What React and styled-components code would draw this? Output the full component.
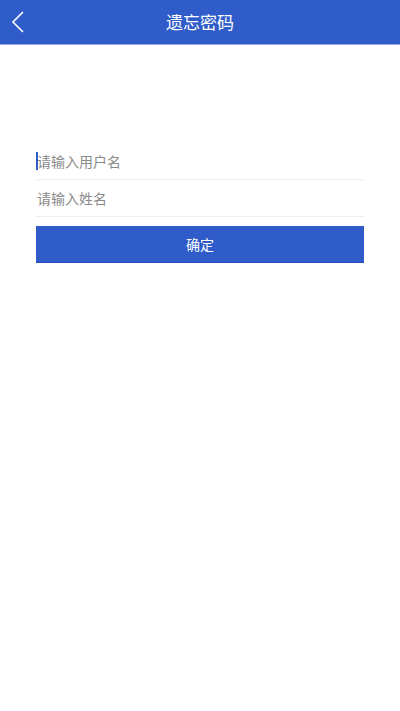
import React from 'react';
import styled, { createGlobalStyle } from 'styled-components';

const GlobalStyle = createGlobalStyle`
  html, body {
    margin: 0;
    padding: 0;
    background: #fff;
    font-family: "Noto Sans CJK SC", "Noto Sans", sans-serif;
  }
`;

const Page = styled.div`
  width: 400px;
  min-height: 711px;
  background: #fff;
`;

const NavBar = styled.header`
  position: relative;
  height: 44px;
  background-color: #2f5cc8;
  border-bottom: 1px solid #93a9e2;
  display: flex;
  align-items: center;
  justify-content: center;
`;

const BackButton = styled.button`
  position: absolute;
  left: 6px;
  top: 8px;
  width: 24px;
  height: 28px;
  padding: 0;
  border: 0;
  background: transparent;
  display: flex;
  align-items: center;
  justify-content: center;
`;

const NavTitle = styled.h1`
  margin: 0;
  font-size: 17px;
  font-weight: 400;
  color: #fff;
  line-height: 44px;
`;

const Form = styled.form`
  padding: 98px 36px 0;
  display: flex;
  flex-direction: column;
`;

const FieldRow = styled.label`
  position: relative;
  display: flex;
  border-bottom: 1px solid #efefef;

  &::before {
    content: '';
    display: ${(props) => (props.focused ? 'block' : 'none')};
    position: absolute;
    left: 0;
    top: 9px;
    width: 2px;
    height: 18px;
    background: #2f5cc8;
  }
`;

const Field = styled.input`
  flex: 1;
  height: 36px;
  border: 0;
  padding: 0 0 0 1px;
  font-family: inherit;
  font-size: 14px;
  color: #333;
  outline: none;
  background: transparent;
  caret-color: transparent;

  &::placeholder {
    color: #8a8a8a;
  }
`;

const Submit = styled.button`
  margin-top: 9px;
  height: 37px;
  border: 0;
  border-bottom: 1px solid #2450bd;
  background-color: #2f5cc8;
  color: #fff;
  font-family: inherit;
  font-size: 14px;
`;

const App = () => (
  <Page>
    <GlobalStyle />
    <NavBar>
      <BackButton type="button" aria-label="返回">
        <svg width="14" height="22" viewBox="0 0 14 22">
          <path d="M12 1 L2 11 L12 21" fill="none" stroke="#fff" strokeWidth="1.6" />
        </svg>
      </BackButton>
      <NavTitle>遗忘密码</NavTitle>
    </NavBar>
    <Form onSubmit={(e) => e.preventDefault()}>
      <FieldRow focused>
        <Field placeholder="请输入用户名" />
      </FieldRow>
      <FieldRow>
        <Field placeholder="请输入姓名" />
      </FieldRow>
      <Submit type="submit">确定</Submit>
    </Form>
  </Page>
);

export default App;
